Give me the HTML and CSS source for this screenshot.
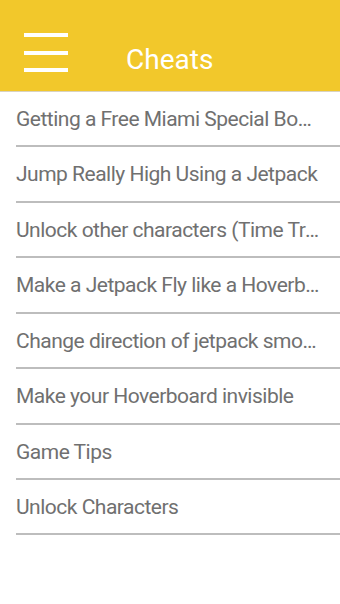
FILE: index.html
```html
<!DOCTYPE html>
<html>
<head>
<meta charset="utf-8">
<link rel="stylesheet" href="styles.css">
</head>
<body>
<header class="bar">
  <svg class="menu" width="44" height="39" viewBox="0 0 44 39">
    <rect x="0" y="0" width="44" height="4" fill="#fff"/>
    <rect x="0" y="18" width="44" height="4" fill="#fff"/>
    <rect x="0" y="35" width="44" height="4" fill="#fff"/>
  </svg>
  <h1 class="title">Cheats</h1>
</header>
<ul class="list">
  <li class="item">Getting a Free Miami Special Board</li>
  <li class="item">Jump Really High Using a Jetpack</li>
  <li class="item">Unlock other characters (Time Travel)</li>
  <li class="item">Make a Jetpack Fly like a Hoverboard</li>
  <li class="item">Change direction of jetpack smoothly</li>
  <li class="item">Make your Hoverboard invisible</li>
  <li class="item">Game Tips</li>
  <li class="item">Unlock Characters</li>
</ul>
</body>
</html>
```
FILE: styles.css
```css
html, body {
  margin: 0;
  padding: 0;
  background: #fff;
}
body {
  width: 340px;
  font-family: Roboto, "Noto Sans", sans-serif;
}
.bar {
  height: 92px;
  background: #f2c82b;
  border-bottom: 1px solid #d8d2c0;
  display: flex;
  align-items: flex-start;
  padding: 33px 0 0 24px;
  box-sizing: border-box;
}
.menu {
  display: block;
  flex: none;
}
.title {
  margin: 13px 0 0 58px;
  color: #fff;
  font-weight: 400;
  font-size: 28px;
  line-height: 28px;
}
.list {
  list-style: none;
  margin: 0;
  padding: 0 0 0 16px;
}
.item {
  display: block;
  height: 55.43px;
  box-sizing: border-box;
  border-bottom: 2px solid #bdbdbd;
  padding-right: 18px;
  color: #707070;
  font-size: 21px;
  letter-spacing: -0.5px;
  line-height: 55px;
  white-space: nowrap;
  overflow: hidden;
  text-overflow: ellipsis;
}
```
